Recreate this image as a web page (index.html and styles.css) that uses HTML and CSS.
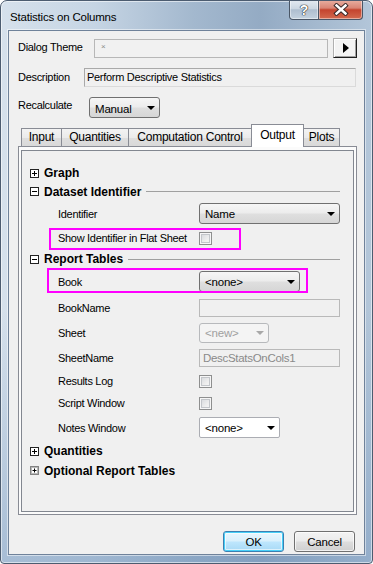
FILE: index.html
```html
<!DOCTYPE html>
<html>
<head>
<meta charset="utf-8">
<title>Statistics on Columns</title>
<link rel="stylesheet" href="styles.css">
</head>
<body>
<div class="window">
  <div class="titlebar">
    <span class="title">Statistics on Columns</span>
    <div class="caption-btns">
      <span class="cbtn help">?</span>
      <span class="cbtn close"><svg width="18" height="13" viewBox="0 0 18 13"><path d="M4.5 2.5 L13.5 10.5 M13.5 2.5 L4.5 10.5" stroke="#3a2a2a" stroke-width="4.4" stroke-linecap="square" fill="none"/><path d="M4.5 2.5 L13.5 10.5 M13.5 2.5 L4.5 10.5" stroke="#ffffff" stroke-width="2.4" stroke-linecap="square" fill="none"/></svg></span>
    </div>
  </div>
  <div class="client">
    <div class="row theme-row">
      <span class="lbl lbl-theme">Dialog Theme</span>
      <div class="theme-box"><span class="tiny-x">×</span></div>
      <div class="arrow-btn"><span class="tri-right"></span></div>
    </div>
    <div class="row desc-row">
      <span class="lbl lbl-desc">Description</span>
      <div class="desc-box">Perform Descriptive Statistics</div>
    </div>
    <div class="row recalc-row">
      <span class="lbl lbl-recalc">Recalculate</span>
      <div class="combo combo-manual"><span class="ctext">Manual</span><span class="tri-down"></span></div>
    </div>
    <div class="tabs">
      <span class="tab tab-input">Input</span>
      <span class="tab tab-quant">Quantities</span>
      <span class="tab tab-comp">Computation Control</span>
      <span class="tab tab-output selected">Output</span>
      <span class="tab tab-plots">Plots</span>
    </div>
    <div class="panel">
      <div class="tree">
        <div class="trow head h18">
          <svg class="pm" width="9" height="9" viewBox="0 0 9 9"><rect x="0.5" y="0.5" width="8" height="8" fill="#fff" stroke="#222"/><path d="M2 4.5h5M4.5 2v5" stroke="#000"/></svg>
          <span class="htext">Graph</span>
        </div>
        <div class="trow head h19">
          <svg class="pm" width="9" height="9" viewBox="0 0 9 9"><rect x="0.5" y="0.5" width="8" height="8" fill="#fff" stroke="#222"/><path d="M2 4.5h5" stroke="#000"/></svg>
          <span class="htext">Dataset Identifier</span>
          <span class="hline"></span>
        </div>
        <div class="trow sub h25">
          <span class="slbl">Identifier</span>
          <div class="combo combo-ident"><span class="ctext">Name</span><span class="tri-down"></span></div>
        </div>
        <div class="trow sub h24">
          <span class="slbl">Show Identifier in Flat Sheet</span>
          <span class="check"></span>
          <span class="mark mark-show"></span>
        </div>
        <div class="trow head h18">
          <svg class="pm" width="9" height="9" viewBox="0 0 9 9"><rect x="0.5" y="0.5" width="8" height="8" fill="#fff" stroke="#222"/><path d="M2 4.5h5" stroke="#000"/></svg>
          <span class="htext">Report Tables</span>
          <span class="hline"></span>
        </div>
        <div class="trow sub h27">
          <span class="slbl">Book</span>
          <div class="combo combo-book"><span class="ctext">&lt;none&gt;</span><span class="tri-down"></span></div>
          <span class="mark mark-book"></span>
        </div>
        <div class="trow sub h25">
          <span class="slbl">BookName</span>
          <div class="tbox"></div>
        </div>
        <div class="trow sub h26">
          <span class="slbl">Sheet</span>
          <div class="combo combo-sheet disabled"><span class="ctext">&lt;new&gt;</span><span class="tri-down"></span></div>
        </div>
        <div class="trow sub h23">
          <span class="slbl">SheetName</span>
          <div class="tbox"><span class="ttext">DescStatsOnCols1</span></div>
        </div>
        <div class="trow sub h24">
          <span class="slbl">Results Log</span>
          <span class="check"></span>
        </div>
        <div class="trow sub h20">
          <span class="slbl">Script Window</span>
          <span class="check"></span>
        </div>
        <div class="trow sub h29">
          <span class="slbl">Notes Window</span>
          <div class="combo combo-notes"><span class="ctext">&lt;none&gt;</span><span class="tri-down"></span></div>
        </div>
        <div class="trow head h18">
          <svg class="pm" width="9" height="9" viewBox="0 0 9 9"><rect x="0.5" y="0.5" width="8" height="8" fill="#fff" stroke="#222"/><path d="M2 4.5h5M4.5 2v5" stroke="#000"/></svg>
          <span class="htext">Quantities</span>
        </div>
        <div class="trow head h21">
          <svg class="pm" width="9" height="9" viewBox="0 0 9 9"><rect x="0.5" y="0.5" width="8" height="8" fill="#d8d8d8" stroke="#222" stroke-dasharray="1 1"/><rect x="1.5" y="1.5" width="6" height="6" fill="#fff" stroke="#888" stroke-dasharray="1 1"/><path d="M2.5 4.5h4M4.5 2.5v4" stroke="#000"/></svg>
          <span class="htext">Optional Report Tables</span>
        </div>
      </div>
    </div>
    <div class="buttons">
      <button class="btn btn-ok">OK</button>
      <button class="btn btn-cancel">Cancel</button>
    </div>
  </div>
</div>
</body>
</html>
```
FILE: styles.css
```css
html, body {
  margin: 0;
  padding: 0;
  background: #ffffff;
}
body {
  font-family: "Liberation Sans", Arial, sans-serif;
  font-size: 11px;
  color: #000;
}
.window {
  box-sizing: border-box;
  width: 373px;
  height: 564px;
  border: 1px solid #4c5c70;
  border-radius: 7px 7px 4px 4px;
  background:
    linear-gradient(180deg, rgba(120,150,190,0) 55%, rgba(110,145,185,0.45) 100%),
    linear-gradient(90deg, #d6e1ec 0%, #c6d5e4 25%, #a3b8ce 52%, #94abc4 70%, #b3c6d9 100%);
  box-shadow: inset 0 0 0 1px rgba(255,255,255,0.55);
  display: flex;
  flex-direction: column;
  overflow: hidden;
}
.titlebar {
  height: 29px;
  flex: none;
  display: flex;
  justify-content: space-between;
  align-items: flex-start;
  padding: 0 9px 0 9px;
}
.title {
  font-size: 11.5px;
  letter-spacing: -0.2px;
  line-height: 14px;
  margin-top: 9px;
  color: #000;
}
.caption-btns {
  display: flex;
  margin-top: -1px;
}
.cbtn {
  box-sizing: border-box;
  height: 20px;
  border: 1px solid #4a5666;
  border-top: none;
  display: flex;
  align-items: center;
  justify-content: center;
  box-shadow: inset 0 0 0 1px rgba(255,255,255,0.45);
}
.help {
  width: 30px;
  border-radius: 0 0 0 4px;
  background: linear-gradient(180deg, #e4eaf1 0%, #ccd7e2 45%, #aebecf 52%, #c4d2df 100%);
  color: #fff;
  font-weight: bold;
  font-size: 14px;
  text-shadow: 0 0 1px #222, 0 0 1px #222, 0 0 1px #222;
}
.close {
  width: 45px;
  margin-left: -1px;
  border-radius: 0 0 4px 0;
  background: linear-gradient(180deg, #e9b0a2 0%, #d98575 42%, #c4442e 52%, #d36a4f 100%);
}
.client {
  box-sizing: border-box;
  flex: 1;
  margin: 0 7px 8px 7px;
  border: 1px solid #6f829a;
  background: #f0f0f0;
  padding: 7px 0 2px 9px;
  display: flex;
  flex-direction: column;
  box-shadow: 0 0 0 1px rgba(255,255,255,0.5);
}
.row {
  display: flex;
  align-items: center;
  flex: none;
}
.lbl {
  flex: none;
  letter-spacing: -0.3px;
  margin-top: -3px;
}
.theme-row { height: 20px; }
.lbl-theme { width: 76px; }
.theme-box {
  box-sizing: border-box;
  width: 234px;
  height: 19px;
  border: 1px solid #b7b7b7;
  background: #f1f1f1;
  display: flex;
  align-items: center;
  padding-left: 6px;
}
.tiny-x {
  font-size: 8px;
  color: #8a8a8a;
  margin-top: -4px;
}
.arrow-btn {
  box-sizing: border-box;
  width: 24px;
  height: 20px;
  margin-left: 5px;
  border: 1px solid;
  border-color: #b0b0b0 #1e1e1e #1e1e1e #b0b0b0;
  background: #f3f3f3;
  box-shadow: inset 1px 1px 0 #ffffff, inset -1px -1px 0 #a0a0a0;
  display: flex;
  align-items: center;
  justify-content: center;
}
.tri-right {
  width: 0;
  height: 0;
  border-left: 6px solid #000;
  border-top: 5px solid transparent;
  border-bottom: 5px solid transparent;
  margin-left: 1px;
}
.desc-row { height: 19px; margin-top: 10px; }
.lbl-desc { width: 66px; margin-top: -1px; }
.desc-box {
  box-sizing: border-box;
  width: 272px;
  height: 19px;
  border: 1px solid;
  border-color: #a9a9a9 #dadada #dadada #a9a9a9;
  background: #f0f0f0;
  padding-left: 2px;
  line-height: 17px;
  letter-spacing: -0.3px;
}
.recalc-row { height: 21px; margin-top: 10px; }
.lbl-recalc { width: 71px; margin-top: -5px; }
.combo {
  box-sizing: border-box;
  height: 21px;
  border: 1px solid #707070;
  border-radius: 3px;
  background: linear-gradient(180deg, #f6f6f6 0%, #ececec 48%, #dfdfdf 52%, #d6d6d6 100%);
  display: flex;
  align-items: center;
  justify-content: space-between;
  padding: 0 4px 0 5px;
  flex: none;
}
.ctext {
  letter-spacing: -0.2px;
  font-size: 11.5px;
}
.tri-down {
  width: 0;
  height: 0;
  border-top: 4px solid #000;
  border-left: 4px solid transparent;
  border-right: 4px solid transparent;
}
.combo-manual { width: 71px; }
.combo-manual .ctext { margin-top: 2px; }
.tabs {
  display: flex;
  align-items: flex-end;
  height: 22px;
  margin-top: 6px;
  padding-left: 3px;
  flex: none;
  position: relative;
  z-index: 2;
}
.tab {
  box-sizing: border-box;
  height: 18px;
  border: 1px solid #898c95;
  border-bottom: none;
  margin-left: -1px;
  background: linear-gradient(180deg, #f3f3f3 0%, #ebebeb 50%, #dedede 52%, #d9d9d9 100%);
  font-size: 12px;
  letter-spacing: -0.25px;
  text-align: center;
  line-height: 17px;
}
.tab-input { width: 41px; margin-left: 0; }
.tab-quant { width: 68px; }
.tab-comp { width: 124px; }
.tab-output { width: 53px; }
.tab-plots { width: 37px; }
.tab.selected {
  height: 23px;
  margin-bottom: -1px;
  background: #ffffff;
  line-height: 21px;
  position: relative;
  z-index: 3;
}
.panel {
  box-sizing: border-box;
  width: 339px;
  height: 369px;
  border: 1px solid #898c95;
  background: #fbfbfb;
  padding: 3px 2px 2px 2px;
  flex: none;
  display: flex;
  flex-direction: column;
}
.tree {
  flex: 1;
  border: 1px solid #828790;
  background: #f0f0f0;
  padding-top: 13px;
}
.trow {
  display: flex;
  align-items: center;
  position: relative;
}
.h18 { height: 18px; }
.h19 { height: 19px; }
.h20 { height: 20px; }
.h21 { height: 21px; }
.h23 { height: 23px; }
.h24 { height: 24px; }
.h25 { height: 25px; }
.h26 { height: 26px; }
.h27 { height: 27px; }
.h29 { height: 29px; }
.head { padding-left: 8px; }
.pm { flex: none; display: block; }
.htext {
  font-weight: bold;
  font-size: 12px;
  letter-spacing: 0;
  margin-left: 5px;
}
.hline {
  flex: 1;
  height: 1px;
  background: #a0a0a0;
  margin: 0 13px 0 5px;
}
.sub { padding-left: 36px; }
.slbl {
  width: 141px;
  flex: none;
  letter-spacing: -0.3px;
  white-space: nowrap;
}
.combo-ident { width: 141px; }
.combo-book { width: 101px; }
.combo-sheet { width: 70px; height: 20px; }
.combo-notes {
  width: 81px;
  background: #ffffff;
  border-color: #abadb3;
  border-radius: 2px;
}
.combo.disabled {
  border-color: #b7b9bc;
  background: #f4f4f4;
  color: #a0a0a0;
}
.combo.disabled .tri-down { border-top-color: #a8a8a8; }
.tbox {
  box-sizing: border-box;
  width: 141px;
  height: 18px;
  border: 1px solid #b9b9b9;
  background: #f0f0f0;
  display: flex;
  align-items: center;
  padding-left: 3px;
}
.ttext {
  color: #8a8a8a;
  letter-spacing: -0.3px;
  font-size: 11.5px;
}
.check {
  box-sizing: border-box;
  width: 13px;
  height: 13px;
  border: 1px solid #8e8f8f;
  background: linear-gradient(135deg, #d2d5d9 0%, #eeeeee 60%, #f8f8f8 100%);
  box-shadow: inset 0 0 0 1px #f6f6f6, inset 0 0 0 2px #c3c6ca;
  flex: none;
}
.mark {
  position: absolute;
  box-sizing: border-box;
  border: 2px solid #ff00ff;
  pointer-events: none;
}
.mark-show { left: 27px; top: 2px; width: 192px; height: 22px; }
.mark-book { left: 25px; top: 0px; width: 261px; height: 25px; }
.buttons {
  display: flex;
  justify-content: flex-end;
  gap: 10px;
  margin-top: auto;
  padding-right: 9px;
  flex: none;
}
.btn {
  box-sizing: border-box;
  width: 61px;
  height: 21px;
  border: 1px solid #707070;
  border-radius: 3px;
  background: linear-gradient(180deg, #f3f3f3 0%, #ebebeb 48%, #dddddd 52%, #d0d0d0 100%);
  font-family: "Liberation Sans", Arial, sans-serif;
  font-size: 11.5px;
  letter-spacing: -0.2px;
  color: #000;
  padding: 0;
  box-shadow: inset 0 0 0 1px rgba(255,255,255,0.7);
}
.btn-ok {
  border-color: #3c7fb1;
  background: linear-gradient(180deg, #eaf6fd 0%, #d9f0fc 48%, #bee6fd 52%, #a7d9f5 100%);
  box-shadow: inset 0 0 0 1px #48d0f8, inset 0 0 0 2px rgba(255,255,255,0.6);
}
```
